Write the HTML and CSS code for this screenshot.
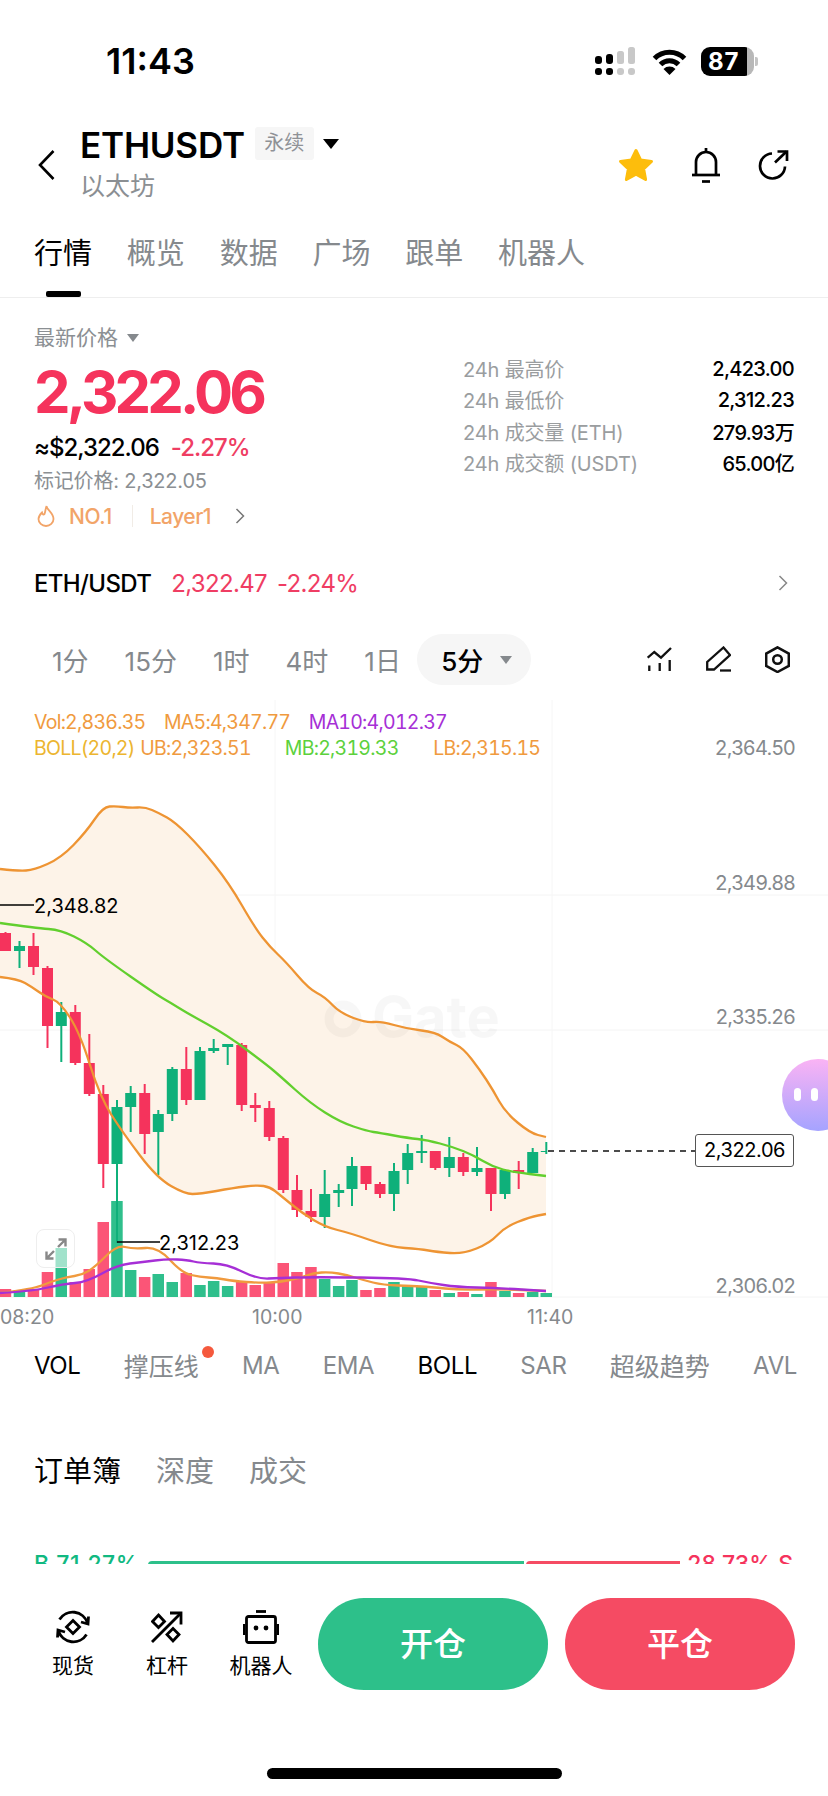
FILE: index.html
```html
<!DOCTYPE html>
<html lang="zh-CN">
<head>
    <meta charset="UTF-8">
    <title>ETHUSDT</title>
    <link rel="stylesheet" href="styles.css">
</head>
<body>
<div class="page">
    <div class="status-bar">
        <div class="clock">11:43</div>
        <div class="status-icons">
            <svg class="signal" width="42" height="29" viewBox="0 0 42 29">
                <rect x="0" y="9" width="7" height="8" rx="3" fill="#000"/>
                <rect x="11" y="7" width="7" height="10" rx="3" fill="#000"/>
                <rect x="22" y="4" width="7" height="13" rx="2.5" fill="#c8c8c8"/>
                <rect x="33" y="0" width="7" height="17" rx="2.5" fill="#c8c8c8"/>
                <rect x="0" y="21" width="7" height="7" rx="3" fill="#000"/>
                <rect x="11" y="21" width="7" height="7" rx="3" fill="#000"/>
                <rect x="22" y="21" width="7" height="7" rx="3" fill="#c8c8c8"/>
                <rect x="33" y="21" width="7" height="7" rx="3" fill="#c8c8c8"/>
            </svg>
            <svg class="wifi" width="35" height="27" viewBox="0 0 35 27" fill="none" stroke="#000" stroke-width="5">
                <path d="M2.5 10.5A21 21 0 0 1 32.5 10.5"/>
                <path d="M8.5 16.5A12.5 12.5 0 0 1 26.5 16.5"/>
                <path d="M17.5 27L11.5 21A8.5 8.5 0 0 1 23.5 21Z" fill="#000" stroke="none"/>
            </svg>
            <div class="battery">87</div>
        </div>
    </div>

    <div class="top-bar">
        <svg class="back" width="17" height="30" viewBox="0 0 17 30" fill="none" stroke="#000" stroke-width="2.6"><path d="M15.5 1L2 15L15.5 29"/></svg>
        <div class="title-col">
            <div class="title-row">
                <span class="symbol">ETHUSDT</span>
                <span class="perp-tag">永续</span>
                <span class="tri-black"></span>
            </div>
            <div class="coin-name">以太坊</div>
        </div>
        <div class="top-actions">
            <svg width="36" height="34" viewBox="0 0 36 34"><path d="M18 2.5L22.6 12L33.5 13.4L25.6 20.8L27.6 31.5L18 26.3L8.4 31.5L10.4 20.8L2.5 13.4L13.4 12Z" fill="#fdbd0c" stroke="#fdbd0c" stroke-width="3" stroke-linejoin="round"/></svg>
            <svg width="30" height="36" viewBox="0 0 30 36" fill="none" stroke="#000" stroke-width="2.7"><path d="M5 27.5V15A10 10 0 0 1 25 15V27.5"/><path d="M1 28H29"/><path d="M11 34.5H19"/><path d="M15 1V4"/></svg>
            <svg width="31" height="31" viewBox="0 0 31 31" fill="none" stroke="#000" stroke-width="2.7"><path d="M14 4.5A12.5 12.5 0 1 0 27 17.5"/><path d="M17 13.5L28.5 2.5"/><path d="M19.5 2.5H29V12"/></svg>
        </div>
    </div>

    <div class="main-tabs">
        <span class="tab active">行情</span>
        <span class="tab">概览</span>
        <span class="tab">数据</span>
        <span class="tab">广场</span>
        <span class="tab">跟单</span>
        <span class="tab">机器人</span>
    </div>

    <div class="price-block">
        <div class="price-left">
            <div class="price-label">最新价格<span class="tri-gray"></span></div>
            <div class="price-big">2,322.06</div>
            <div class="price-sub">≈$2,322.06<span class="change">-2.27%</span></div>
            <div class="price-mark">标记价格: 2,322.05</div>
            <div class="tags">
                <svg width="18" height="22" viewBox="0 0 18 22" fill="none" stroke="#f2a468" stroke-width="1.8"><path d="M9.5 1C10 5 16.5 8 16.5 14A7.5 7 0 0 1 1.5 14C1.5 11 3.5 9 5 7.5C5.5 9.5 6.5 10 7.5 9C8.5 6.5 8.5 3.5 9.5 1Z"/></svg>
                <span class="tag-no">NO.1</span>
                <span class="tag-sep"></span>
                <span class="tag-name">Layer1</span>
                <svg class="tag-arrow" width="10" height="16" viewBox="0 0 10 16" fill="none" stroke="#777" stroke-width="1.5"><path d="M1.5 1L8.5 8L1.5 15"/></svg>
            </div>
        </div>
        <div class="stats">
            <div class="stat-row"><span>24h 最高价</span><b>2,423.00</b></div>
            <div class="stat-row"><span>24h 最低价</span><b>2,312.23</b></div>
            <div class="stat-row"><span>24h 成交量 (ETH)</span><b>279.93万</b></div>
            <div class="stat-row"><span>24h 成交额 (USDT)</span><b>65.00亿</b></div>
        </div>
    </div>

    <div class="spot-row">
        <span class="spot-name">ETH/USDT</span>
        <span class="spot-price">2,322.47</span>
        <span class="spot-change">-2.24%</span>
        <svg class="spot-arrow" width="10" height="16" viewBox="0 0 10 16" fill="none" stroke="#888" stroke-width="1.5"><path d="M1.5 1L8.5 8L1.5 15"/></svg>
    </div>

    <div class="period-row">
        <span class="period">1分</span>
        <span class="period">15分</span>
        <span class="period">1时</span>
        <span class="period">4时</span>
        <span class="period">1日</span>
        <span class="period-pill">5分<i class="tri-gray"></i></span>
        <div class="chart-tools">
            <svg width="25" height="26" viewBox="0 0 25 26" fill="none" stroke="#111" stroke-width="2.3"><path d="M.7 11.7L7.3 6L14 11.7L24 2"/><path d="M2.3 19.5V25M12.7 17V25M22.7 14V25"/></svg>
            <svg width="25" height="26" viewBox="0 0 25 26" fill="none" stroke="#111" stroke-width="2.3"><path d="M1.2 23.5V16L17.5 1.5L24 9L8 23.5Z"/><path d="M14 24.5H25"/></svg>
            <svg width="25" height="27" viewBox="0 0 25 27" fill="none" stroke="#111" stroke-width="2.5"><path d="M12.5 1.3L23.8 7.6V19.9L12.5 26L1.2 19.9V7.6Z"/><circle cx="12.5" cy="13.5" r="4.3"/></svg>
        </div>
    </div>

    <div class="chart">
        <svg id="chartSvg" class="chart-svg" width="828" height="640" viewBox="0 700 828 640"></svg>
        <div class="legend">
            <div class="legend-row">
                <span class="c-orange">Vol:2,836.35</span>
                <span class="c-orange">MA5:4,347.77</span>
                <span class="c-purple">MA10:4,012.37</span>
            </div>
            <div class="legend-row second">
                <span class="c-yellow boll">BOLL(20,2)</span>
                <span class="c-orange ub">UB:2,323.51</span>
                <span class="c-green mb">MB:2,319.33</span>
                <span class="c-orange lb">LB:2,315.15</span>
            </div>
        </div>
        <div class="expand-btn">
            <svg width="22" height="22" viewBox="0 0 22 22" fill="none" stroke="#888" stroke-width="2.4"><path d="M1.5 20.5L9 13M1.5 13.5V20.5H8.5"/><path d="M20.5 1.5L13 9M13.5 1.5H20.5V8.5"/></svg>
        </div>
        <div class="last-price">2,322.06</div>
    </div>

    <div class="indicators">
        <span class="ind on">VOL</span>
        <span class="ind cjk dotted">撑压线</span>
        <span class="ind">MA</span>
        <span class="ind">EMA</span>
        <span class="ind on">BOLL</span>
        <span class="ind">SAR</span>
        <span class="ind cjk">超级趋势</span>
        <span class="ind">AVL</span>
    </div>

    <div class="book-tabs">
        <span class="tab active-plain">订单簿</span>
        <span class="tab">深度</span>
        <span class="tab">成交</span>
    </div>

    <div class="ratio-row">
        <span class="ratio-buy">B 71.27%</span>
        <span class="ratio-bar"><i class="bar-buy"></i><i class="bar-sell"></i></span>
        <span class="ratio-sell">28.73% S</span>
    </div>

    <div class="bottom-bar">
        <div class="shortcut">
            <svg width="36" height="36" viewBox="0 0 36 36" fill="none" stroke="#000" stroke-width="2.8"><path d="M4.5 10.5A15.5 15.5 0 0 1 32.5 14"/><path d="M33.5 7.5L33 15L26 13"/><path d="M31.5 25.5A15.5 15.5 0 0 1 3.5 22"/><path d="M2.5 28.5L3 21L10 23"/><path d="M18 11.5L24.5 18L18 24.5L11.5 18Z"/></svg>
            <span>现货</span>
        </div>
        <div class="shortcut">
            <svg width="32" height="36" viewBox="0 0 32 33" fill="none" stroke="#000" stroke-width="2.8"><path d="M1 31.5L30 2.5"/><path d="M19 2.5H30V14"/><path d="M7.5 4.5L13.5 11L7.5 17L1.5 11Z"/><path d="M22 18L28 24L22 30.5L16 24Z"/></svg>
            <span>杠杆</span>
        </div>
        <div class="shortcut">
            <svg width="36" height="36" viewBox="0 0 36 34" fill="none" stroke="#000" stroke-width="2.8"><path d="M13 1.5H23"/><rect x="3.5" y="6.5" width="29" height="26" rx="2"/><path d="M1 14V25M35 14V25"/><circle cx="13" cy="18" r="2.4" fill="#000" stroke="none"/><circle cx="23" cy="18" r="2.4" fill="#000" stroke="none"/></svg>
            <span>机器人</span>
        </div>
        <div class="trade-btn open">开仓</div>
        <div class="trade-btn close">平仓</div>
    </div>

    <div class="home-wrap"><div class="home-bar"></div></div>

    <div class="bot-float"><i></i><i></i></div>
</div>
<script src="chart.js"></script>
</body>
</html>
```

FILE: styles.css
```css
* {
    box-sizing: border-box;
}
html, body {
    margin: 0;
    padding: 0;
    background-color: #fff;
}
body {
    font-family: Inter, "Noto Sans CJK SC", sans-serif;
    color: #000;
}
.page {
    position: relative;
    width: 828px;
    height: 1796px;
    overflow: hidden;
}

/* status bar */
.status-bar {
    height: 122px;
    display: flex;
    align-items: center;
    justify-content: space-between;
    padding: 0 74px 0 106px;
}
.clock {
    font-size: 36px;
    font-weight: 600;
}
.status-icons {
    display: flex;
    align-items: center;
    gap: 14px;
}
.signal {
    margin-right: 1px;
}
.battery {
    position: relative;
    width: 53px;
    height: 29px;
    border-radius: 9px;
    background: linear-gradient(90deg, #000 87%, #b8b8b8 87%);
    color: #fff;
    font-size: 24px;
    font-weight: 700;
    line-height: 29px;
    padding-left: 7px;
    letter-spacing: 1px;
}
.battery::after {
    content: "";
    position: absolute;
    right: -4px;
    top: 10px;
    width: 3px;
    height: 9px;
    border-radius: 0 2px 2px 0;
    background-color: #c4c4c4;
}

/* header */
.top-bar {
    height: 88px;
    display: flex;
    align-items: center;
    padding: 0 39px 0 38px;
}
.back {
    margin-right: 25px;
    margin-top: -2px;
}
.title-col {
    flex: 1;
    margin-top: -6px;
}
.title-row {
    display: flex;
    align-items: center;
    height: 42px;
}
.symbol {
    font-size: 35px;
    font-weight: 600;
    letter-spacing: -0.2px;
}
.perp-tag {
    margin-left: 10px;
    width: 59px;
    height: 33px;
    background-color: #f6f6f6;
    border-radius: 3px;
    color: #8f9296;
    font-size: 20px;
    line-height: 33px;
    text-align: center;
    margin-top: -2px;
}
.tri-black {
    margin-left: 9px;
    margin-top: -2px;
    border-left: 8px solid transparent;
    border-right: 8px solid transparent;
    border-top: 10px solid #000;
}
.coin-name {
    margin-top: 3px;
    color: #8b8f93;
    font-size: 25px;
    line-height: 34px;
}
.top-actions {
    display: flex;
    align-items: center;
    gap: 37px;
    margin-top: -3px;
}

/* tabs */
.main-tabs {
    height: 88px;
    display: flex;
    gap: 34.8px;
    padding: 20px 0 0 34px;
    border-bottom: 1px solid #eeeeee;
}
.tab {
    color: #85898d;
    font-size: 29px;
    line-height: 48px;
    height: 48px;
    position: relative;
}
.tab.active {
    color: #000;
}
.tab.active-plain {
    color: #000;
}
.tab.active::after {
    content: "";
    position: absolute;
    left: 12px;
    right: 11px;
    top: 61px;
    height: 6px;
    border-radius: 2px;
    background-color: #000;
}

/* price */
.price-block {
    display: flex;
    justify-content: space-between;
    padding: 0 34px 0 34px;
    height: 244px;
}
.price-label {
    margin-top: 28px;
    color: #8b8f93;
    font-size: 21px;
    line-height: 24px;
    display: flex;
    align-items: center;
}
.tri-gray {
    display: inline-block;
    margin-left: 9px;
    border-left: 6px solid transparent;
    border-right: 6px solid transparent;
    border-top: 8px solid #85898d;
}
.price-big {
    margin-top: 10px;
    color: #f5335c;
    font-size: 58px;
    font-weight: 700;
    line-height: 64px;
    letter-spacing: -3.8px;
}
.price-sub {
    margin-top: 6px;
    font-size: 24px;
    line-height: 36px;
    font-weight: 500;
    letter-spacing: -1px;
}
.change {
    margin-left: 12px;
    color: #ef3d63;
}
.price-mark {
    color: #8b8f93;
    font-size: 20px;
    line-height: 30px;
    letter-spacing: -0.2px;
}
.tags {
    margin-top: 3px;
    display: flex;
    align-items: center;
    height: 34px;
    padding-left: 3px;
    color: #f2a468;
    font-size: 21px;
    font-weight: 500;
}
.tag-no {
    margin-left: 14px;
    letter-spacing: -0.4px;
}
.tag-sep {
    width: 1px;
    height: 22px;
    background-color: #f1ece6;
    margin: 0 17px 0 20px;
}
.tag-name {
    letter-spacing: -0.5px;
}
.tag-arrow {
    margin-left: 24px;
}
.stats {
    width: 331px;
    padding-top: 55px;
}
.stat-row {
    display: flex;
    justify-content: space-between;
    align-items: center;
    height: 31.3px;
    font-size: 20px;
}
.stat-row span {
    color: #9a9d9f;
    letter-spacing: -0.15px;
}
.stat-row b {
    font-weight: 500;
    letter-spacing: -0.7px;
}

/* spot row */
.spot-row {
    height: 58px;
    display: flex;
    align-items: center;
    padding: 0 40px 0 34px;
    font-size: 24px;
    letter-spacing: -0.65px;
    margin-top: 12px;
}
.spot-name {
    font-weight: 500;
}
.spot-price {
    margin-left: 20px;
    color: #ef3d63;
}
.spot-change {
    margin-left: 10px;
    color: #ef3d63;
}
.spot-arrow {
    margin-left: auto;
}

/* period row */
.period-row {
    height: 52px;
    margin-top: 21px;
    display: flex;
    align-items: center;
    padding-left: 52px;
    position: relative;
}
.period {
    color: #85898d;
    font-size: 26px;
    margin-right: 36px;
}
.period-pill {
    margin-left: -19.7px;
    width: 114px;
    height: 51px;
    border-radius: 26px;
    background-color: #f6f6f6;
    font-size: 26px;
    display: flex;
    align-items: center;
    padding-left: 24px;
    font-weight: 500;
}
.period-pill .tri-gray {
    margin-left: 17px;
    margin-top: 2px;
}
.chart-tools {
    margin-left: auto;
    margin-right: 38px;
    display: flex;
    align-items: center;
    gap: 34px;
}

/* chart */
.chart {
    position: relative;
    height: 640px;
    margin-top: 15px;
}
.chart-svg {
    position: absolute;
    left: 0;
    top: 0;
}
.chart-svg text {
    font-family: Inter, sans-serif;
    font-size: 20px;
}
.legend {
    position: relative;
    padding: 10px 0 0 34px;
    font-size: 19.5px;
    line-height: 25.5px;
    letter-spacing: -0.75px;
    font-variant-numeric: tabular-nums;
}
.legend-row {
    display: flex;
    gap: 18.5px;
}
.legend-row.second {
    gap: 0;
}
.c-orange { color: #f09a3e; }
.c-purple { color: #a62fd6; }
.c-yellow { color: #ecb52f; }
.c-green { color: #5cd13c; }
.ub { margin-left: 5.6px; }
.mb { margin-left: 34px; }
.lb { margin-left: 34.6px; }
.expand-btn {
    position: absolute;
    left: 36px;
    top: 529px;
    width: 39px;
    height: 39px;
    border: 1px solid #eeeeee;
    border-radius: 8px;
    background-color: rgba(255,255,255,0.55);
    display: flex;
    align-items: center;
    justify-content: center;
}
.last-price {
    position: absolute;
    left: 695px;
    top: 434px;
    width: 99px;
    height: 33px;
    border: 1px solid #555;
    border-radius: 3px;
    background-color: #fff;
    font-size: 20px;
    line-height: 31px;
    text-align: center;
    letter-spacing: -0.4px;
}

/* indicators */
.indicators {
    height: 50px;
    display: flex;
    align-items: center;
    justify-content: space-between;
    padding: 0 31px 0 34px;
    font-size: 24px;
    letter-spacing: -0.4px;
}
.ind {
    color: #85898d;
    position: relative;
}
.ind.on {
    color: #000;
}
.ind.cjk {
    font-size: 25px;
    letter-spacing: 0;
}
.ind.dotted::after {
    content: "";
    position: absolute;
    right: -15px;
    top: -1px;
    width: 12px;
    height: 12px;
    border-radius: 50%;
    background-color: #f5593d;
}

/* order book */
.book-tabs {
    height: 48px;
    margin-top: 58px;
    display: flex;
    gap: 35px;
    padding-left: 34px;
}
.ratio-row {
    height: 9px;
    margin-top: 59px;
    overflow: hidden;
    display: flex;
    justify-content: space-between;
    padding: 0 35px 0 34px;
    font-size: 23px;
    font-weight: 500;
    line-height: 18px;
}
.ratio-buy {
    color: #10b981;
    letter-spacing: 0.5px;
}
.ratio-sell {
    color: #f5335c;
}
.ratio-bar {
    position: absolute;
    left: 148px;
    width: 532px;
    top: 1561px;
    height: 3px;
    display: flex;
    gap: 2px;
    overflow: hidden;
}
.ratio-bar i {
    display: block;
    height: 10px;
    border-radius: 4px 0 0 0;
}
.bar-buy {
    width: 376px;
    background-color: #2dc08a;
}
.bar-sell {
    flex: 1;
    background-color: #f54b63;
}

/* bottom */
.bottom-bar {
    height: 126px;
    margin-top: 34px;
    display: flex;
    align-items: flex-start;
    padding-left: 0;
    position: relative;
}
.shortcut {
    display: flex;
    flex-direction: column;
    align-items: center;
    width: 94px;
    font-size: 21px;
    padding-top: 11px;
}
.shortcut span {
    line-height: 30px;
    margin-top: 6px;
    white-space: nowrap;
}
.shortcut:first-child {
    margin-left: 26px;
}
.trade-btn {
    height: 92px;
    width: 230px;
    border-radius: 46px;
    color: #fff;
    font-size: 33px;
    font-weight: 500;
    line-height: 92px;
    text-align: center;
}
.trade-btn.open {
    margin-left: 10px;
    background-color: #2dc08a;
}
.trade-btn.close {
    margin-left: 17px;
    background-color: #f54b63;
}
.home-wrap {
    display: flex;
    justify-content: center;
    margin-top: 44px;
}
.home-bar {
    width: 295px;
    height: 11px;
    border-radius: 6px;
    background-color: #000;
}

/* floating bot */
.bot-float {
    position: absolute;
    left: 782px;
    top: 1059px;
    width: 72px;
    height: 72px;
    border-radius: 50%;
    background: linear-gradient(180deg, #fab3f4 0%, #a5a3ff 100%);
    display: flex;
    gap: 10px;
    padding: 29px 0 0 12px;
}
.bot-float i {
    width: 7px;
    height: 13px;
    border-radius: 4px;
    background-color: #fff;
}
```

FILE: chart.js
```js
// x, color (1 = red), wick top, body top, body bottom, wick bottom
const candles = [
    [5.5, 1, 932, 933, 951, 951],
    [19.5, 0, 941, 946, 951, 968],
    [33.5, 1, 933, 946, 967, 975],
    [47.5, 1, 966, 968, 1026, 1048],
    [61.3, 0, 1002, 1012, 1026, 1062],
    [75.3, 1, 1005, 1012, 1063, 1065],
    [89.3, 1, 1034, 1063, 1094, 1096],
    [103.3, 1, 1085, 1094, 1164, 1188],
    [117, 0, 1100, 1107, 1164, 1243],
    [130.7, 0, 1086, 1093, 1107, 1132],
    [144.7, 1, 1084, 1093, 1134, 1154],
    [158.3, 0, 1110, 1114, 1132, 1175],
    [172.3, 0, 1067, 1069, 1114, 1121],
    [186.3, 1, 1047, 1069, 1100, 1105],
    [200, 0, 1047, 1051, 1100, 1100],
    [213.7, 0, 1039, 1048, 1051, 1053],
    [227.7, 0, 1044, 1044, 1047, 1065],
    [241.7, 1, 1043, 1045, 1105, 1111],
    [255.3, 1, 1093, 1105, 1108, 1122],
    [269.3, 1, 1101, 1108, 1137, 1141],
    [283.3, 1, 1136, 1138, 1190, 1193],
    [297, 1, 1175, 1190, 1210, 1217],
    [311, 1, 1189, 1211, 1217, 1222],
    [324.7, 0, 1170, 1194, 1217, 1228],
    [338.7, 0, 1184, 1190, 1193, 1207],
    [352, 0, 1157, 1166, 1189, 1206],
    [366, 1, 1166, 1166, 1184, 1190],
    [380, 1, 1182, 1184, 1194, 1198],
    [394, 0, 1163, 1171, 1194, 1211],
    [407.7, 0, 1144, 1153, 1170, 1184],
    [421.7, 0, 1135, 1151, 1153, 1163],
    [435.3, 1, 1151, 1151, 1168, 1170],
    [449.3, 0, 1137, 1157, 1168, 1177],
    [463.3, 1, 1153, 1157, 1172, 1176],
    [477, 0, 1147, 1168, 1172, 1176],
    [491, 1, 1168, 1168, 1194, 1211],
    [505, 0, 1170, 1170, 1194, 1199],
    [518.7, 1, 1161, 1170, 1173, 1189],
    [532.7, 0, 1148, 1152, 1173, 1173],
    [546.3, 0, 1142, 1151, 1152, 1154]
];

// bar top, color
const volumes = [
    [1289, 1], [1290, 0], [1289, 1], [1272, 1], [1248, 0], [1282, 1], [1269, 1], [1222, 1],
    [1201, 0], [1270, 0], [1277, 1], [1274, 0], [1282, 0], [1273, 1], [1285, 0], [1281, 0],
    [1286, 0], [1282, 1], [1285, 1], [1282, 1], [1263, 1], [1272, 1], [1267, 1], [1279, 0],
    [1286, 0], [1280, 0], [1290, 1], [1288, 1], [1282, 0], [1286, 0], [1287, 0], [1290, 1],
    [1293, 0], [1292, 1], [1294, 0], [1282, 1], [1291, 0], [1293, 1], [1292, 0], [1293, 0]
];

const upper = [[0,869],[18,871],[34,870],[61,858],[86,832],[103,807],[116,806],[130,808],[145,807],[159,813],[175,822],[200,847],[229,883],[255,928],[270,947],[286,962],[309,989],[325,997],[340,1013],[367,1023],[380,1021],[408,1029],[435,1032],[450,1042],[463,1048],[480,1070],[493,1090],[505,1112],[530,1133],[546,1137]];
const middle = [[0,923],[36,928],[61,930],[87,943],[104,958],[157,995],[171,1003],[187,1013],[227,1035],[267,1065],[280,1076],[310,1103],[340,1122],[367,1131],[380,1133],[408,1138],[427,1140],[453,1147],[473,1155],[493,1167],[513,1172],[546,1176]];
const lower = [[0,977],[18,979],[32,987],[46,997],[60,1002],[80,1033],[100,1097],[123,1133],[157,1178],[185,1194],[200,1194],[233,1188],[257,1185],[270,1187],[280,1195],[302,1213],[325,1227],[350,1233],[390,1247],[420,1249],[437,1252],[463,1254],[490,1243],[505,1227],[530,1217],[546,1214]];
const ma5 = [[0,1293],[33,1289],[50,1282],[67,1277],[82,1275],[95,1267],[117,1245],[133,1249],[158,1247],[182,1273],[200,1277],[217,1278],[233,1281],[260,1283],[280,1282],[300,1278],[313,1273],[330,1272],[347,1275],[363,1280],[383,1285],[413,1286],[430,1287],[460,1290],[497,1289],[546,1291]];
const ma10 = [[0,1293],[33,1291],[63,1284],[87,1282],[117,1265],[143,1262],[167,1259],[187,1260],[200,1263],[227,1264],[257,1279],[280,1278],[313,1277],[407,1278],[430,1283],[457,1287],[497,1288],[546,1291]];

const RED = '#f5335c', GREEN = '#0fb07a';
const pts = line => line.map(p => p.join(',')).join(' ');

// rounds the corners of a line through the midpoints of its segments
function smooth(line) {
    let d = `M${line[0][0]} ${line[0][1]}`;
    for (let i = 1; i < line.length - 1; i++) {
        const mx = (line[i][0] + line[i + 1][0]) / 2;
        const my = (line[i][1] + line[i + 1][1]) / 2;
        d += `Q${line[i][0]} ${line[i][1]} ${mx} ${my}`;
    }
    const last = line[line.length - 1];
    return d + `L${last[0]} ${last[1]}`;
}

let svg = '';

// grid
[895, 1030, 1297].forEach(y => {
    svg += `<line x1="0" y1="${y}" x2="828" y2="${y}" stroke="#f4f4f4"/>`;
});
[275, 552].forEach(x => {
    svg += `<line x1="${x}" y1="700" x2="${x}" y2="1297" stroke="#f6f6f6"/>`;
});

// band
svg += `<polygon points="${pts(upper)} ${pts(lower.slice().reverse())}" fill="#fdf3e8"/>`;

// watermark
svg += `<circle cx="343" cy="1019" r="14" fill="none" stroke="#000" stroke-opacity="0.03" stroke-width="9"/>`;
svg += `<text x="372" y="1037" fill="#000" fill-opacity="0.03" style="font-size:56px;font-weight:700">Gate</text>`;

// volume
candles.forEach((c, i) => {
    const [top, red] = volumes[i];
    svg += `<rect x="${c[0] - 5.8}" y="${top}" width="11.5" height="${1297 - top}" fill="${red ? '#fb5577' : '#2fbf8c'}"/>`;
});

// candles
candles.forEach((c, i) => {
    const [x, red, wt, bt, bb, wb] = c;
    const col = red ? RED : GREEN;
    svg += `<line x1="${x}" y1="${wt}" x2="${x}" y2="${wb}" stroke="${col}" stroke-width="2"/>`;
    const w = i === 39 ? 5.5 : 11;
    svg += `<rect x="${x - 5.5}" y="${bt}" width="${w}" height="${bb - bt}" fill="${col}"/>`;
});

// lines
[[upper, '#ee9433'], [lower, '#ee9433'], [middle, '#62cf2e'], [ma5, '#f09a3e'], [ma10, '#a62fd6']].forEach(([line, col]) => {
    svg += `<path d="${smooth(line)}" fill="none" stroke="${col}" stroke-width="2.3"/>`;
});

// high / low callouts
svg += `<line x1="0" y1="905" x2="34" y2="905" stroke="#000" stroke-width="1.3"/>`;
svg += `<text x="34" y="913" fill="#000">2,348.82</text>`;
svg += `<line x1="117" y1="1242" x2="160" y2="1242" stroke="#000" stroke-width="1.3"/>`;
svg += `<text x="159" y="1250" fill="#000">2,312.23</text>`;

// last price line
svg += `<line x1="548" y1="1151" x2="695" y2="1151" stroke="#111" stroke-width="1.4" stroke-dasharray="6 5"/>`;

// axes
[['2,364.50', 755], ['2,349.88', 890], ['2,335.26', 1024], ['2,306.02', 1293]].forEach(([t, y]) => {
    svg += `<text x="795" y="${y}" text-anchor="end" fill="#85898d" letter-spacing="-0.6">${t}</text>`;
});
[['08:20', 0], ['10:00', 252], ['11:40', 527]].forEach(([t, x]) => {
    svg += `<text x="${x}" y="1324" fill="#85898d" style="font-size:19.5px">${t}</text>`;
});

document.getElementById('chartSvg').innerHTML = svg;
```
